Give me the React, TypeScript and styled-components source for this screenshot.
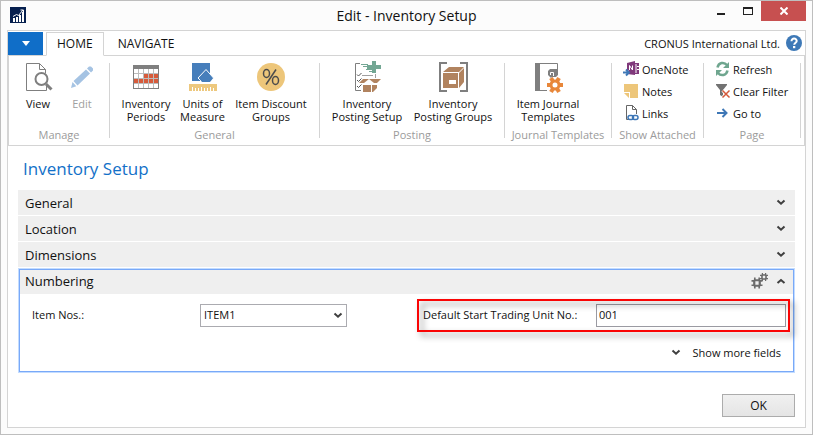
import React from "react";
import styled, { createGlobalStyle } from "styled-components";

const GlobalStyle = createGlobalStyle`
  *, *::before, *::after { box-sizing: border-box; }
  body { margin: 0; background: #fcfcfc; }
  body, button, input, select {
    font-family: "Open Sans", "Noto Sans", sans-serif;
    font-size: 12px;
    color: #111;
  }
  button { background: none; border: 0; padding: 0; margin: 0; }
  svg { display: block; flex: none; }
`;

const Window = styled.div`
  min-height: 100vh;
  display: flex;
  flex-direction: column;
  padding: 0 6px;
  padding-bottom: 6px;
  border: 1px solid #bebebe;
  background: #fcfcfc;
`;

const TitleBar = styled.header`
  display: grid;
  grid-template-columns: 1fr auto 1fr;
  height: 29px;
`;

const AppIcon = styled.div`
  padding: 6px 0 0 3px;
`;

const WindowTitle = styled.h1`
  margin: 0;
  font-size: 14px;
  line-height: 30px;
  font-weight: 400;
`;

const WindowControls = styled.div`
  display: flex;
  justify-content: flex-end;
`;

const WindowButton = styled.button<{ $close?: boolean }>`
  display: flex;
  align-items: center;
  justify-content: center;
  width: ${(p) => (p.$close ? 45 : 27)}px;
  height: 20px;
  background: ${(p) => (p.$close ? "#c75050" : "transparent")};
`;

const Client = styled.main`
  flex: 1;
  display: flex;
  flex-direction: column;
  background: #fff;
  border: 1px solid #d4d4d4;
`;

const TabBar = styled.nav`
  display: flex;
  align-items: flex-end;
  height: 25px;
  padding-top: 1px;
  border-bottom: 1px solid #d4d4d4;
`;

const FileMenu = styled.button`
  display: flex;
  align-items: center;
  justify-content: center;
  width: 35px;
  height: 23px;
  margin-right: 3px;
  background: #106ec8;
`;

const Tab = styled.button<{ $active?: boolean }>`
  height: 24px;
  margin-bottom: -1px;
  padding: 0 ${(p) => (p.$active ? 10 : 13)}px;
  border: 1px solid ${(p) => (p.$active ? "#d4d4d4" : "transparent")};
  border-bottom-color: ${(p) => (p.$active ? "#fff" : "transparent")};
  line-height: 22px;
`;

const Company = styled.div`
  display: flex;
  align-items: center;
  gap: 6px;
  height: 24px;
  margin-left: auto;
  padding-right: 3px;
  font-size: 11px;
`;

const Ribbon = styled.div`
  display: flex;
  height: 90px;
  padding: 7px 0;
  border: solid #d4d4d4;
  border-width: 0 1px 1px;
`;

const Group = styled.section<{ $width: number }>`
  display: flex;
  flex-direction: column;
  justify-content: space-between;
  min-width: ${(p) => p.$width}px;
  height: 75px;
  border-right: 1px solid #d4d4d4;
`;

const LargeActions = styled.div<{ $inset: number }>`
  display: flex;
  padding-left: ${(p) => p.$inset}px;
`;

const SmallActions = styled.div<{ $inset: number }>`
  display: flex;
  flex-direction: column;
  padding-left: ${(p) => p.$inset}px;
  margin-top: -5px;
`;

const GroupCaption = styled.div`
  margin-bottom: -5px;
  text-align: center;
  line-height: 16px;
  font-size: 11px;
  color: #9b9b9b;
  white-space: nowrap;
`;

const LargeButton = styled.button<{ $width: number }>`
  display: flex;
  flex-direction: column;
  align-items: center;
  width: ${(p) => p.$width}px;
  font-size: 11px;
  line-height: 13px;
  white-space: pre-line;
  &:disabled { color: #a0a0a0; }
  svg { margin: -2px 0 4px; }
`;

const SmallButton = styled.button`
  display: flex;
  align-items: center;
  gap: 2px;
  height: 22px;
  font-size: 11px;
  white-space: nowrap;
`;

const Page = styled.div`
  display: flex;
  flex-direction: column;
  padding: 10px;
`;

const PageTitle = styled.h2`
  margin: 0 0 9px 5px;
  font-size: 17px;
  line-height: 25px;
  font-weight: 400;
  color: #1270c8;
`;

const FastTab = styled.button`
  display: flex;
  align-items: center;
  justify-content: space-between;
  height: 25px;
  margin-bottom: 1px;
  padding: 0 9px 0 7px;
  font-size: 13px;
  background: #efefef;
`;

const FastTabOpen = styled.section`
  margin: 1px 1px 0;
  border: 1px solid #79a9f8;
  outline: 1px solid #c3dcff;
`;

const FastTabHeader = styled.div`
  display: flex;
  align-items: center;
  height: 24px;
  padding: 0 7px 2px 5px;
  background: #efefef;
`;

const FastTabName = styled.h3`
  flex: 1;
  margin: 0;
  font-size: 13px;
  font-weight: 400;
`;

const HeaderButton = styled.button`
  margin-left: 7px;
`;

const Fields = styled.div`
  display: grid;
  grid-template-columns: 1fr 1fr;
  column-gap: 12px;
  padding: 5px 3px 0 12px;
`;

const Field = styled.div<{ $highlight?: boolean }>`
  position: relative;
  display: flex;
  align-items: center;
  height: 33px;
  padding: ${(p) => (p.$highlight ? "0 4px 0 6px" : "0")};
  &::after {
    content: "";
    display: ${(p) => (p.$highlight ? "block" : "none")};
    position: absolute;
    inset: 0;
    border: 2px solid #fa0505;
    filter: drop-shadow(4px 4px 3px rgba(0, 0, 0, 0.45));
    pointer-events: none;
  }
`;

const Label = styled.label<{ $width: number }>`
  flex: none;
  width: ${(p) => p.$width}px;
  padding-bottom: 2px;
  font-size: 11px;
  white-space: nowrap;
`;

const SelectBox = styled.div`
  display: grid;
  width: 147px;
  align-items: center;
  > * { grid-area: 1 / 1; }
  svg { justify-self: end; margin-right: 4px; pointer-events: none; }
`;

const Select = styled.select`
  appearance: none;
  width: 100%;
  height: 23px;
  padding: 0 0 2px 3px;
  border: 1px solid #ababb0;
  border-radius: 0;
  background: #fff;
  font-size: 11px;
`;

const TextInput = styled.input`
  flex: 1;
  min-width: 0;
  height: 23px;
  padding: 0 2px 2px;
  border: 1px solid #9a9aa2;
  font-size: 11px;
`;

const MoreRow = styled.div`
  display: flex;
  justify-content: flex-end;
  padding: 10px 12px 9px;
`;

const MoreButton = styled.button`
  display: flex;
  align-items: center;
  gap: 11px;
  height: 20px;
  font-size: 11px;
`;

const Footer = styled.footer`
  display: flex;
  justify-content: flex-end;
  margin-top: 22px;
`;

const OkButton = styled.button`
  width: 73px;
  height: 23px;
  border: 1px solid #acacac;
  background: linear-gradient(#f0f0f0, #e5e5e5);
`;

const Chevron = ({ up = false }: { up?: boolean }) => (
  <svg width="10" height="7" viewBox="0 0 10 7" fill="none" stroke="#3f3f3f" strokeWidth="2">
    <path d={up ? "M1.500 5 5 2l3.500 3" : "M1.500 1.500 5 4.700l3.500-3.200"} />
  </svg>
);

const LogoIcon = () => (
  <svg width="16" height="16" viewBox="0 0 16 16">
    <path fill="#07204f" d="M0 0h16v16H0z" />
    <path fill="#fff" d="M3 11h2v4H3zM6 10h2v5H6zM9 8h2v7H9zM12 5h2v10h-2z" />
    <path d="m3 9.500 3.500-2 2 1L13 3M10.500 3H13.500v3" fill="none" stroke="#fff" />
  </svg>
);

const ViewIcon = () => (
  <svg width="30" height="32" viewBox="0 0 30 32" fill="none" stroke="#7f7f7f">
    <path d="M23.500 25v4.500h-20v-27h13l6 6v4M16.500 2.500v6h6" />
    <circle cx="18.500" cy="18" r="6" fill="#fff" strokeWidth="2" />
    <path d="m23 23 5.500 5.500" strokeWidth="3" />
  </svg>
);

const PencilIcon = () => (
  <svg width="30" height="32" viewBox="0 0 30 32" fill="#a5c3e3">
    <path d="m4 27 1.500-6 3.800 4.300zM6.500 20 19 8.500l4 4L10.500 24.500zM20 7.500l2-2h2l2 2v2l-2 2z" />
  </svg>
);

const CalendarIcon = () => (
  <svg width="30" height="32" viewBox="0 0 30 32">
    <path fill="#7f7f7f" d="M2 4h26v24H2z" />
    <path fill="#bcbcbc" d="M3 8h24v19H3z" />
    {[0, 1, 2, 3].map((r) =>
      [0, 1, 2, 3, 4].map((c) => (
        <rect
          key={`${r}${c}`}
          x={3 + c * 5}
          y={8 + r * 5}
          width="4"
          height="4"
          fill={(r === 1 && c > 1) || r === 2 ? "#d75b3b" : "#fff"}
        />
      ))
    )}
  </svg>
);

const UnitsIcon = () => (
  <svg width="30" height="32" viewBox="0 0 30 32">
    <path fill="#467ebb" d="M4 2h18v18H4z" />
    <path fill="#467ebb" stroke="#fff" d="m10 17 8-8.500 7.500 8.500-5 5.500h-5z" />
    <path fill="#fff" d="M4 20h22v3H4z" />
    <path fill="#467ebb" d="M11 17h14l-3 4h-8z" />
    <path fill="#edc87e" d="M1 23h28v7H1z" />
    <path stroke="#fff" d="M4.500 26v4M7.500 27v3M10.500 27v3M13.500 26v4M16.500 27v3M19.500 27v3M22.500 26v4M25.500 27v3" />
  </svg>
);

const PercentIcon = () => (
  <svg width="30" height="32" viewBox="0 0 30 32">
    <circle cx="15" cy="16" r="14" fill="#edc67a" />
    <g fill="none" stroke="#4c4c4c" strokeWidth="1.500">
      <ellipse cx="10.500" cy="12.500" rx="3" ry="4" />
      <ellipse cx="19.500" cy="19.500" rx="3" ry="4" />
      <path d="M20 8.500 10 23.500" />
    </g>
  </svg>
);

const PostingSetupIcon = () => (
  <svg width="30" height="32" viewBox="0 2 30 32" overflow="visible">
    <path d="M8 4.500H3.500v27H9" fill="none" stroke="#7f7f7f" />
    <path stroke="#73a794" d="M9 5.500h7M11 7.500h6M14 10.500h6M17 12.500h4" />
    <path fill="#73a794" d="M20 2h4v4h5v4h-5v4h-4v-4h-5V6h5z" />
    <path d="m5 15.500 1.500 1.500 3-3M5 21l1.500 1.500 3-3M5 27l1.500 1.500 3-3" fill="none" stroke="#555" />
    <path stroke="#a0a0a0" fill="none" d="M10 16.500h11M23.500 15v4" />
    <path fill="#b1835f" d="m11 20-4 4h5l5-4zM17 20l5 4h3l4-4zM11 26h8v7h-8zM20 26h5v3l-4 4h-1z" />
  </svg>
);

const PostingGroupsIcon = () => (
  <svg width="32" height="32" viewBox="0 0 32 32">
    <path fill="none" stroke="#7f7f7f" strokeWidth="2" d="M10 2H3v28h7M23 2h7v28h-7" />
    <path fill="#b1835f" d="m6 11 6-5h15l-5 5zM6 12h15v15H6zM22 12l5-5v14l-5 6z" />
    <path fill="#fff" d="M12 19h7v4h-7z" />
  </svg>
);

const Gear = ({ x, y, color }: { x: number; y: number; color: string }) => (
  <g transform={`translate(${x} ${y})`}>
    <circle r="7" fill="#fff" />
    {[30, 90, 150].map((a) => (
      <rect key={a} x="-2" y="-8" width="4" height="16" fill={color} transform={`rotate(${a})`} />
    ))}
    <circle r="4" fill="#fff" stroke={color} strokeWidth="3" />
  </g>
);

const JournalIcon = () => (
  <svg width="32" height="32" viewBox="0 0 32 32">
    <path d="M6 2.500h19.500v6M6 29.500h9" fill="none" stroke="#7f7f7f" />
    <path fill="#7f7f7f" d="M3 2h5v28H3z" />
    <path fill="#7f7f7f" d="M18 8h8v6l-2 2h-4l-1 1-3-3v-4z" />
    <path d="M18.500 14v-2.500h3V15" fill="none" stroke="#fff" />
    <Gear x={23} y={24} color="#e8873a" />
  </svg>
);

const OneNoteIcon = () => (
  <svg width="18" height="18" viewBox="0 0 18 18">
    <path fill="#80397b" d="m5 3 8-2v14l-8-1zM13 3h4v11h-4z" />
    <path stroke="#fff" fill="none" d="M7.500 10V5.500l3 4.500V5.500M14 4v9" />
    <path stroke="#fff" d="M15 6.500h2M15 9.500h2" />
    <path stroke="#fff" strokeWidth="4" d="M1 12.500h6" />
    <path d="M1 12.500h6M4 9.500l3 3-3 3" fill="none" stroke="#3e77b6" strokeWidth="2" />
  </svg>
);

const NotesIcon = () => (
  <svg width="18" height="18" viewBox="0 0 18 18" fill="#edc67a">
    <path d="M2 2h14v14H8v-6H2zM2 11h5v5z" />
  </svg>
);

const LinksIcon = () => (
  <svg width="18" height="18" viewBox="0 0 18 18" fill="none">
    <path stroke="#666" d="M7 15.500H4.500v-14h6l4 4V10M10.500 1.500v4h4" />
    <g stroke="#3e77b6" strokeWidth="1.500">
      <rect x="6" y="11.500" width="5.500" height="4" rx="2" />
      <rect x="10.500" y="11.500" width="5.500" height="4" rx="2" />
    </g>
  </svg>
);

const RefreshIcon = () => (
  <svg width="16" height="18" viewBox="0 0 16 18">
    <path d="M2.500 7.500C3.500 2.500 9 1.500 12 5M12.500 10.500C11.500 15.500 6 16.500 3 13" fill="none" stroke="#6fa68f" strokeWidth="2.500" />
    <path fill="#6fa68f" d="M14 2v6H8zM1 16v-6h6z" />
  </svg>
);

const ClearFilterIcon = () => (
  <svg width="16" height="18" viewBox="0 0 16 18">
    <path fill="#727272" d="M1 2h11v1L8 8v7l-3-2V8L1 3z" />
    <path d="m7.500 8.500 7 7m0-7-7 7" stroke="#fff" strokeWidth="3" />
    <path d="m7.500 8.500 7 7m0-7-7 7" stroke="#d4593a" strokeWidth="1.500" />
  </svg>
);

const GoToIcon = () => (
  <svg width="16" height="18" viewBox="0 0 16 18" fill="none" stroke="#3e77b6" strokeWidth="2">
    <path d="M2 9h10M7.500 5l4 4-4 4" />
  </svg>
);

const HelpIcon = () => (
  <svg width="16" height="16" viewBox="0 0 16 16">
    <circle cx="8" cy="8" r="8" fill="#3e79b7" />
    <path d="M5.500 6.300c0-3.800 5.300-3.300 5.200-.3 0 1.700-2.500 1.800-2.500 3.800" fill="none" stroke="#fff" strokeWidth="2" />
    <path fill="#fff" d="M7 11h2.300v2.200H7z" />
  </svg>
);

const SmallGear = ({ x, y, size }: { x: number; y: number; size: number }) => (
  <g transform={`translate(${x} ${y}) scale(${size / 10})`}>
    <path d="M-2-5v10M2-5v10M-5-2H5M-5 2H5" stroke="#6c6c6c" strokeWidth="1.500" />
    <rect x="-2.500" y="-2.500" width="5" height="5" rx="1" fill="#efefef" stroke="#6c6c6c" strokeWidth="2" />
  </g>
);

const GearsIcon = () => (
  <svg width="18" height="16" viewBox="0 0 18 16">
    <SmallGear x={6} y={10} size={11} />
    <SmallGear x={13} y={4} size={8} />
  </svg>
);

const closedTabs = ["General", "Location", "Dimensions"];

export default function App() {
  return (
    <>
      <GlobalStyle />
      <Window>
        <TitleBar>
          <AppIcon><LogoIcon /></AppIcon>
          <WindowTitle>Edit - Inventory Setup</WindowTitle>
          <WindowControls>
            <WindowButton aria-label="Minimize">
              <svg width="10" height="10" viewBox="0 0 10 10"><path fill="#222" d="M1 7h8v2H1z" /></svg>
            </WindowButton>
            <WindowButton aria-label="Maximize">
              <svg width="10" height="8" viewBox="0 0 10 8">
                <path fill="#222" fillRule="evenodd" d="M0 0h10v8H0zM1 2v5h8V2z" />
              </svg>
            </WindowButton>
            <WindowButton $close aria-label="Close">
              <svg width="8" height="8" viewBox="0 0 8 8" stroke="#fff" strokeWidth="2"><path d="m0.500 0.500 7 7m0-7-7 7" /></svg>
            </WindowButton>
          </WindowControls>
        </TitleBar>
        <Client>
          <TabBar>
            <FileMenu aria-label="Application menu">
              <svg width="8" height="5" viewBox="0 0 8 5"><path fill="#fff" d="M0 0h8L4 5z" /></svg>
            </FileMenu>
            <Tab $active>HOME</Tab>
            <Tab>NAVIGATE</Tab>
            <Company>
              CRONUS International Ltd.
              <button aria-label="Help"><HelpIcon /></button>
            </Company>
          </TabBar>
          <Ribbon>
            <Group $width={101}>
              <LargeActions $inset={7}>
                <LargeButton $width={44}><ViewIcon />View</LargeButton>
                <LargeButton $width={44} disabled><PencilIcon />Edit</LargeButton>
              </LargeActions>
              <GroupCaption>Manage</GroupCaption>
            </Group>
            <Group $width={210}>
              <LargeActions $inset={8}>
                <LargeButton $width={56}><CalendarIcon />{"Inventory\nPeriods"}</LargeButton>
                <LargeButton $width={57}><UnitsIcon />{"Units of\nMeasure"}</LargeButton>
                <LargeButton $width={80}><PercentIcon />{"Item Discount\nGroups"}</LargeButton>
              </LargeActions>
              <GroupCaption>General</GroupCaption>
            </Group>
            <Group $width={185}>
              <LargeActions $inset={7}>
                <LargeButton $width={80}><PostingSetupIcon />{"Inventory\nPosting Setup"}</LargeButton>
                <LargeButton $width={92}><PostingGroupsIcon />{"Inventory\nPosting Groups"}</LargeButton>
              </LargeActions>
              <GroupCaption>Posting</GroupCaption>
            </Group>
            <Group $width={107}>
              <LargeActions $inset={7}>
                <LargeButton $width={72}><JournalIcon />{"Item Journal\nTemplates"}</LargeButton>
              </LargeActions>
              <GroupCaption>Journal Templates</GroupCaption>
            </Group>
            <Group $width={92}>
              <SmallActions $inset={10}>
                <SmallButton><OneNoteIcon />OneNote</SmallButton>
                <SmallButton><NotesIcon />Notes</SmallButton>
                <SmallButton><LinksIcon />Links</SmallButton>
              </SmallActions>
              <GroupCaption>Show Attached</GroupCaption>
            </Group>
            <Group $width={97}>
              <SmallActions $inset={11}>
                <SmallButton><RefreshIcon />Refresh</SmallButton>
                <SmallButton><ClearFilterIcon />Clear Filter</SmallButton>
                <SmallButton><GoToIcon />Go to</SmallButton>
              </SmallActions>
              <GroupCaption>Page</GroupCaption>
            </Group>
          </Ribbon>
          <Page>
            <PageTitle>Inventory Setup</PageTitle>
            {closedTabs.map((name) => (
              <FastTab key={name} aria-expanded={false}>{name}<Chevron /></FastTab>
            ))}
            <FastTabOpen>
              <FastTabHeader>
                <FastTabName>Numbering</FastTabName>
                <HeaderButton aria-label="Customize"><GearsIcon /></HeaderButton>
                <HeaderButton aria-label="Collapse Numbering"><Chevron up /></HeaderButton>
              </FastTabHeader>
              <Fields>
                <Field>
                  <Label htmlFor="item-nos" $width={168}>Item Nos.:</Label>
                  <SelectBox>
                    <Select id="item-nos" defaultValue="ITEM1"><option>ITEM1</option></Select>
                    <Chevron />
                  </SelectBox>
                </Field>
                <Field $highlight>
                  <Label htmlFor="start-unit" $width={173}>Default Start Trading Unit No.:</Label>
                  <TextInput id="start-unit" defaultValue="001" />
                </Field>
              </Fields>
              <MoreRow>
                <MoreButton><Chevron />Show more fields</MoreButton>
              </MoreRow>
            </FastTabOpen>
            <Footer><OkButton>OK</OkButton></Footer>
          </Page>
        </Client>
      </Window>
    </>
  );
}
